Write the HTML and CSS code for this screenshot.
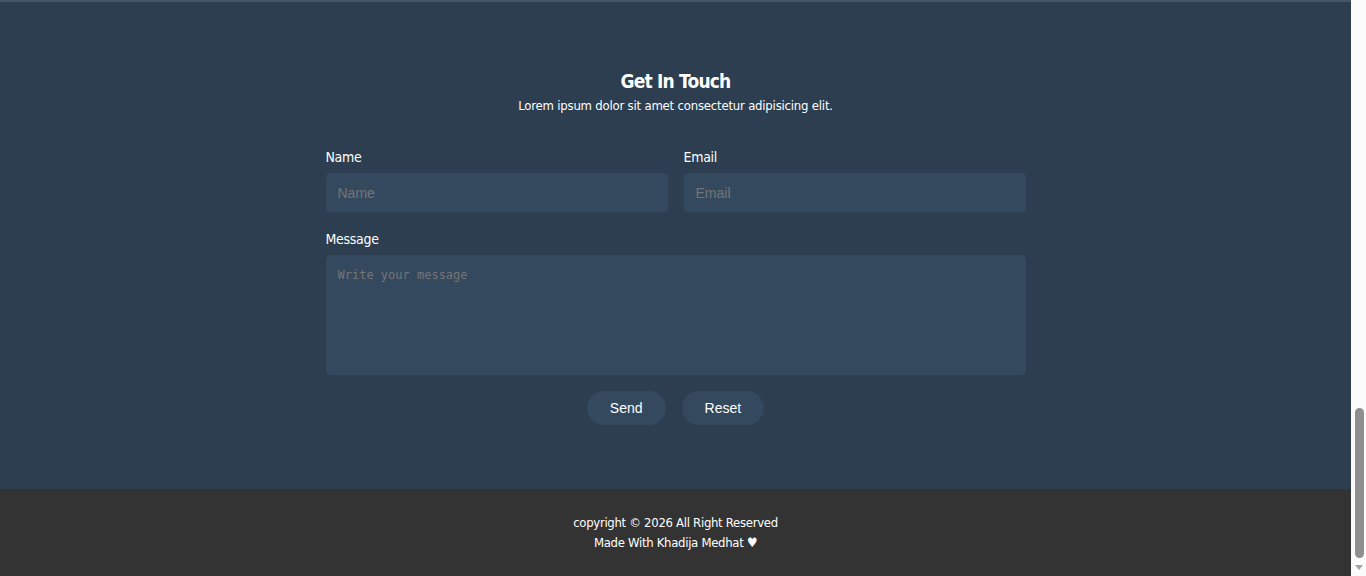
FILE: index.html
```html
<!DOCTYPE html>
<html lang="en">
<head>
<meta charset="utf-8">
<title>Contact</title>
<link rel="stylesheet" href="styles.css">
</head>
<body>
<div class="shell">
  <div class="page" id="page">
    <div class="above"></div>
    <section class="contact">
      <h2 class="title">Get In Touch</h2>
      <p class="subtitle">Lorem ipsum dolor sit amet consectetur adipisicing elit.</p>
      <form class="form">
        <div class="row">
          <div class="field">
            <label for="name">Name</label>
            <input id="name" type="text" placeholder="Name">
          </div>
          <div class="field">
            <label for="email">Email</label>
            <input id="email" type="email" placeholder="Email">
          </div>
        </div>
        <div class="field">
          <label for="msg">Message</label>
          <textarea id="msg" placeholder="Write your message"></textarea>
        </div>
        <div class="actions">
          <button type="button" class="btn">Send</button>
          <button type="reset" class="btn">Reset</button>
        </div>
      </form>
    </section>
    <footer class="footer">
      <p>copyright &copy; 2026 All Right Reserved</p>
      <p>Made With Khadija Medhat &#9829;</p>
    </footer>
  </div>
  <div class="scrollbar" aria-hidden="true">
    <div class="thumb"></div>
    <div class="arrow"></div>
  </div>
</div>
<script src="script.js"></script>
</body>
</html>
```
FILE: styles.css
```css
* { box-sizing: border-box; }
html, body { margin: 0; padding: 0; height: 100%; overflow: hidden; }
body {
  font-family: "DejaVu Sans Condensed", "DejaVu Sans", sans-serif;
  color: #fff;
}
.shell {
  display: flex;
  height: 100vh;
}
.page {
  flex: 1;
  height: 100vh;
  overflow-y: scroll;
  scrollbar-width: none;
}
.page::-webkit-scrollbar { display: none; }
.scrollbar {
  width: 15px;
  flex: none;
  background: #fbfbfb;
  display: flex;
  flex-direction: column;
  justify-content: flex-end;
  align-items: center;
}
.thumb {
  width: 9px;
  height: 150px;
  border-radius: 5px;
  background: #8f8f8f;
  margin-left: 1px;
  margin-bottom: 2px;
}
.arrow {
  margin: 5px 0 6px 1px;
  width: 0;
  height: 0;
  border-left: 4px solid transparent;
  border-right: 4px solid transparent;
  border-top: 5px solid #a3a3a3;
}
.above { height: 1500px; background: #eef0f2; }
.contact {
  background: #2c3e50;
  border-top: 2px solid #45556a;
  padding: 65px 0 64px;
  text-align: center;
}
.title {
  margin: 0;
  font-size: 19px;
  line-height: 29px;
  font-weight: 700;
  letter-spacing: -0.8px;
}
.subtitle {
  margin: 0;
  font-size: 13px;
  line-height: 20px;
  letter-spacing: -0.2px;
}
.form {
  width: 700px;
  margin: 32px auto 0;
  text-align: left;
  display: flex;
  flex-direction: column;
  gap: 18px;
}
.row { display: flex; gap: 16px; }
.row .field { flex: 1; }
.field { display: flex; flex-direction: column; gap: 7px; }
label {
  font-size: 14px;
  line-height: 18px;
  letter-spacing: -0.3px;
}
input, textarea {
  background: #34495e;
  border: none;
  border-radius: 4px;
  color: #fff;
  outline: none;
}
input {
  height: 39px;
  padding: 0 12px;
  font-family: "Liberation Sans", Arial, sans-serif;
  font-size: 14px;
}
textarea {
  height: 120px;
  padding: 13px 12px;
  resize: none;
  font-family: "DejaVu Sans Mono", monospace;
  font-size: 12px;
}
input::placeholder, textarea::placeholder { color: #757575; }
.actions {
  display: flex;
  justify-content: center;
  gap: 16px;
  margin-top: -2px;
}
.btn {
  background: #34495e;
  color: #fff;
  border: none;
  border-radius: 20px;
  height: 34px;
  padding: 0 23px;
  font-family: "Liberation Sans", Arial, sans-serif;
  font-size: 14px;
}
.footer {
  background: #333;
  padding: 24px 0 23px;
  text-align: center;
}
.footer p {
  margin: 0;
  font-size: 13px;
  line-height: 20px;
  letter-spacing: -0.3px;
}
```
FILE: script.js
```js
var page = document.getElementById('page');
page.scrollTop = page.scrollHeight;
```
